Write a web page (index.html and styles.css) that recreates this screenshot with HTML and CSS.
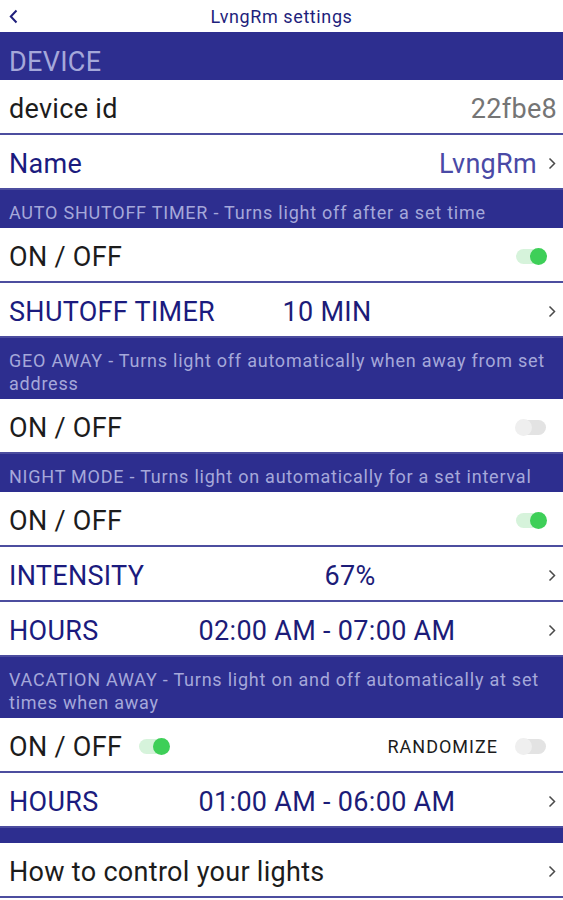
FILE: index.html
```html
<!DOCTYPE html>
<html lang="en">
<head>
  <meta charset="UTF-8">
  <meta name="viewport" content="width=device-width, initial-scale=1.0">
  <title>LvngRm settings</title>
  <link rel="stylesheet" href="styles.css">
</head>
<body>
  <div class="top-bar">
    <svg class="back-icon" width="9" height="15" viewBox="0 0 9 15"><polyline points="7.5,1.5 1.8,7.5 7.5,13.5" fill="none" stroke="#1f1f7c" stroke-width="2"/></svg>
    <div class="top-title">LvngRm settings</div>
    <span></span>
  </div>

  <div class="section-header section-header--big">DEVICE</div>
  <div class="setting-row">
    <span class="label-dark">device id</span>
    <span class="row-right value-gray">22fbe8</span>
  </div>
  <div class="setting-row">
    <span class="label-blue">Name</span>
    <span class="row-right value-light">LvngRm</span>
    <svg class="chevron chevron--near" width="8" height="13" viewBox="0 0 8 13"><polyline points="1.5,1.5 6.5,6.5 1.5,11.5" fill="none" stroke="#4a4a4a" stroke-width="1.5"/></svg>
  </div>

  <div class="section-header">AUTO SHUTOFF TIMER - Turns light off after a set time</div>
  <div class="setting-row">
    <span class="label-dark">ON / OFF</span>
    <span class="toggle toggle--on row-right"></span>
  </div>
  <div class="setting-row setting-row--value">
    <span class="label-blue">SHUTOFF TIMER</span>
    <span class="row-value">10 MIN</span>
    <svg class="chevron" width="8" height="13" viewBox="0 0 8 13"><polyline points="1.5,1.5 6.5,6.5 1.5,11.5" fill="none" stroke="#4a4a4a" stroke-width="1.5"/></svg>
  </div>

  <div class="section-header">GEO AWAY - Turns light off automatically when away from set address</div>
  <div class="setting-row">
    <span class="label-dark">ON / OFF</span>
    <span class="toggle row-right"></span>
  </div>

  <div class="section-header">NIGHT MODE - Turns light on automatically for a set interval</div>
  <div class="setting-row">
    <span class="label-dark">ON / OFF</span>
    <span class="toggle toggle--on row-right"></span>
  </div>
  <div class="setting-row setting-row--value">
    <span class="label-blue">INTENSITY</span>
    <span class="row-value row-value--pct">67%</span>
    <svg class="chevron" width="8" height="13" viewBox="0 0 8 13"><polyline points="1.5,1.5 6.5,6.5 1.5,11.5" fill="none" stroke="#4a4a4a" stroke-width="1.5"/></svg>
  </div>
  <div class="setting-row setting-row--value">
    <span class="label-blue">HOURS</span>
    <span class="row-value">02:00 AM - 07:00 AM</span>
    <svg class="chevron" width="8" height="13" viewBox="0 0 8 13"><polyline points="1.5,1.5 6.5,6.5 1.5,11.5" fill="none" stroke="#4a4a4a" stroke-width="1.5"/></svg>
  </div>

  <div class="section-header">VACATION AWAY - Turns light on and off automatically at set times when away</div>
  <div class="setting-row">
    <span class="label-dark">ON / OFF</span>
    <span class="toggle toggle--on toggle--inline"></span>
    <span class="row-right small-label">RANDOMIZE</span>
    <span class="toggle toggle--after"></span>
  </div>
  <div class="setting-row setting-row--value">
    <span class="label-blue">HOURS</span>
    <span class="row-value">01:00 AM - 06:00 AM</span>
    <svg class="chevron" width="8" height="13" viewBox="0 0 8 13"><polyline points="1.5,1.5 6.5,6.5 1.5,11.5" fill="none" stroke="#4a4a4a" stroke-width="1.5"/></svg>
  </div>

  <div class="section-header section-header--empty"></div>
  <div class="setting-row">
    <span class="label-dark">How to control your lights</span>
    <svg class="chevron row-right" width="8" height="13" viewBox="0 0 8 13"><polyline points="1.5,1.5 6.5,6.5 1.5,11.5" fill="none" stroke="#4a4a4a" stroke-width="1.5"/></svg>
  </div>
</body>
</html>
```

FILE: styles.css
```css
/* base */
body {
  margin: 0;
  background: #fff;
  font-family: Roboto, "Noto Sans", sans-serif;
  overflow: hidden;
}

/* title bar */
.top-bar {
  display: grid;
  grid-template-columns: 40px 1fr 40px;
  align-items: center;
  height: 32px;
  padding-top: 1px;
  box-sizing: border-box;
}

.back-icon {
  margin-left: 9px;
}

.top-title {
  text-align: center;
  font-size: 18px;
  letter-spacing: 0.6px;
  color: #1f1f7c;
}

/* section headers */
.section-header {
  background-color: #2d2e8f;
  color: #a5a8da;
  font-size: 18px;
  letter-spacing: 0.77px;
  line-height: 23px;
  padding: 11px 4px 4px 9px;
}

.section-header--big {
  font-size: 27px;
  letter-spacing: 0.3px;
  line-height: 30px;
  padding: 15px 9px 3px;
}

.section-header--empty {
  height: 15px;
  padding: 0;
}

/* rows */
.setting-row {
  display: flex;
  align-items: center;
  height: 55px;
  box-sizing: border-box;
  padding: 4px 6px 0 9px;
  border-bottom: 2px solid #4c4d9f;
  font-size: 27px;
  letter-spacing: 0.3px;
  white-space: nowrap;
}

.setting-row--value {
  display: grid;
  grid-template-columns: 168px 1fr 80px;
}

.label-dark {
  color: #1c1c1c;
}

.label-blue {
  color: #1b1b7e;
}

.row-right {
  margin-left: auto;
}

.value-gray {
  color: #757575;
}

.value-light {
  color: #4a4aa6;
}

.row-value {
  text-align: center;
  color: #1c1c78;
}

.row-value--pct {
  padding-left: 46px;
}

.chevron {
  justify-self: end;
  margin-right: 1px;
}

.chevron--near {
  margin-left: 11px;
}

.small-label {
  font-size: 18px;
  letter-spacing: 1px;
  color: #1c1c1c;
}

/* switches */
.toggle {
  position: relative;
  width: 30px;
  height: 15px;
  border-radius: 8px;
  background-color: #e3e3e3;
  margin-right: 11px;
}

.toggle::after {
  content: "";
  position: absolute;
  left: -1px;
  top: -1px;
  width: 17px;
  height: 17px;
  border-radius: 50%;
  background-color: #efefef;
}

.toggle--on {
  background-color: #d6f3db;
}

.toggle--on::after {
  left: auto;
  right: -1px;
  background-color: #3ecf58;
}

.toggle--inline {
  margin-left: 17px;
}

.toggle--after {
  margin-left: 18px;
}
```
